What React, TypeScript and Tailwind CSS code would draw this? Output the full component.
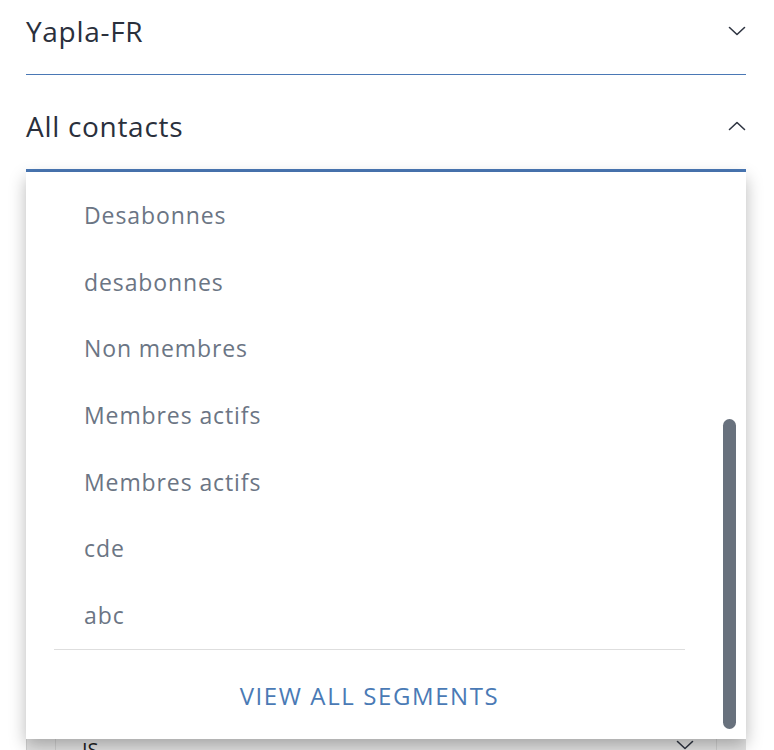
import React from 'react'

const Chevron = ({ up }: { up?: boolean }) => (
  <svg width="18" height="10" viewBox="0 0 18 10" fill="none">
    <path
      d={up ? 'M1.5 8.5 L9 1.5 L16.5 8.5' : 'M1.5 1.5 L9 8.5 L16.5 1.5'}
      stroke="#2f3542"
      strokeWidth="1.6"
      strokeLinecap="round"
      strokeLinejoin="round"
    />
  </svg>
)

const segments = [
  'Desabonnes',
  'desabonnes',
  'Non membres',
  'Membres actifs',
  'Membres actifs',
  'cde',
  'abc',
]

const App = () => {
  return (
    <div
      className="h-[750px] overflow-hidden bg-white pl-[26px] pr-[28px] text-[#2a303c]"
      style={{ fontFamily: '"Open Sans", "Noto Sans", sans-serif' }}
    >
      <div className="flex h-[75px] items-center justify-between border-b border-[#4a78b5] pb-[12px]">
        <span className="text-[28px] tracking-[0.7px]">Yapla-FR</span>
        <Chevron />
      </div>

      <div className="relative z-10">
        <div className="flex h-[97px] items-center justify-between border-b-[3px] border-[#4a78b5] pt-[8px]">
          <span className="text-[28px] tracking-[0.7px]">All contacts</span>
          <Chevron up />
        </div>

        <div className="absolute left-0 right-0 top-full h-[567px] bg-white shadow-[0_6px_16px_rgba(0,0,0,0.28)]">
          <ul className="pt-[10px]">
            {segments.map((s, i) => (
              <li
                key={i}
                className="flex h-[66.67px] items-center pl-[58px] text-[23px] tracking-[0.9px] text-[#6b7584]"
              >
                {s}
              </li>
            ))}
          </ul>
          <div className="ml-[28px] mr-[61px] border-t border-[#dedede]">
            <div className="flex h-[90px] items-center justify-center pt-[2px] text-[24px] tracking-[1.6px] text-[#4a7ab5]">
              VIEW ALL SEGMENTS
            </div>
          </div>
          <div className="absolute bottom-[10px] right-[10px] top-[247px] w-[13px] rounded-full bg-[#68717d]" />
        </div>
      </div>

      {/* content sitting under the menu */}
      <div className="flex h-[600px] flex-col">
        <div className="mt-[62px] h-[2px] w-[2px] bg-[#9aa3ad]" />
        <div className="mt-[502px] flex h-[30px] border-l border-[#cfcfcf] bg-[#e2e2e2] pl-[28px] pr-[29px]">
          <div className="flex flex-1 items-start justify-between border-x border-[#cfcfcf] pl-[26px] pr-[22px] pt-[2px]">
            <span className="text-[20px] leading-none text-[#222]">IS</span>
            <Chevron />
          </div>
        </div>
      </div>
    </div>
  )
}

export default App
